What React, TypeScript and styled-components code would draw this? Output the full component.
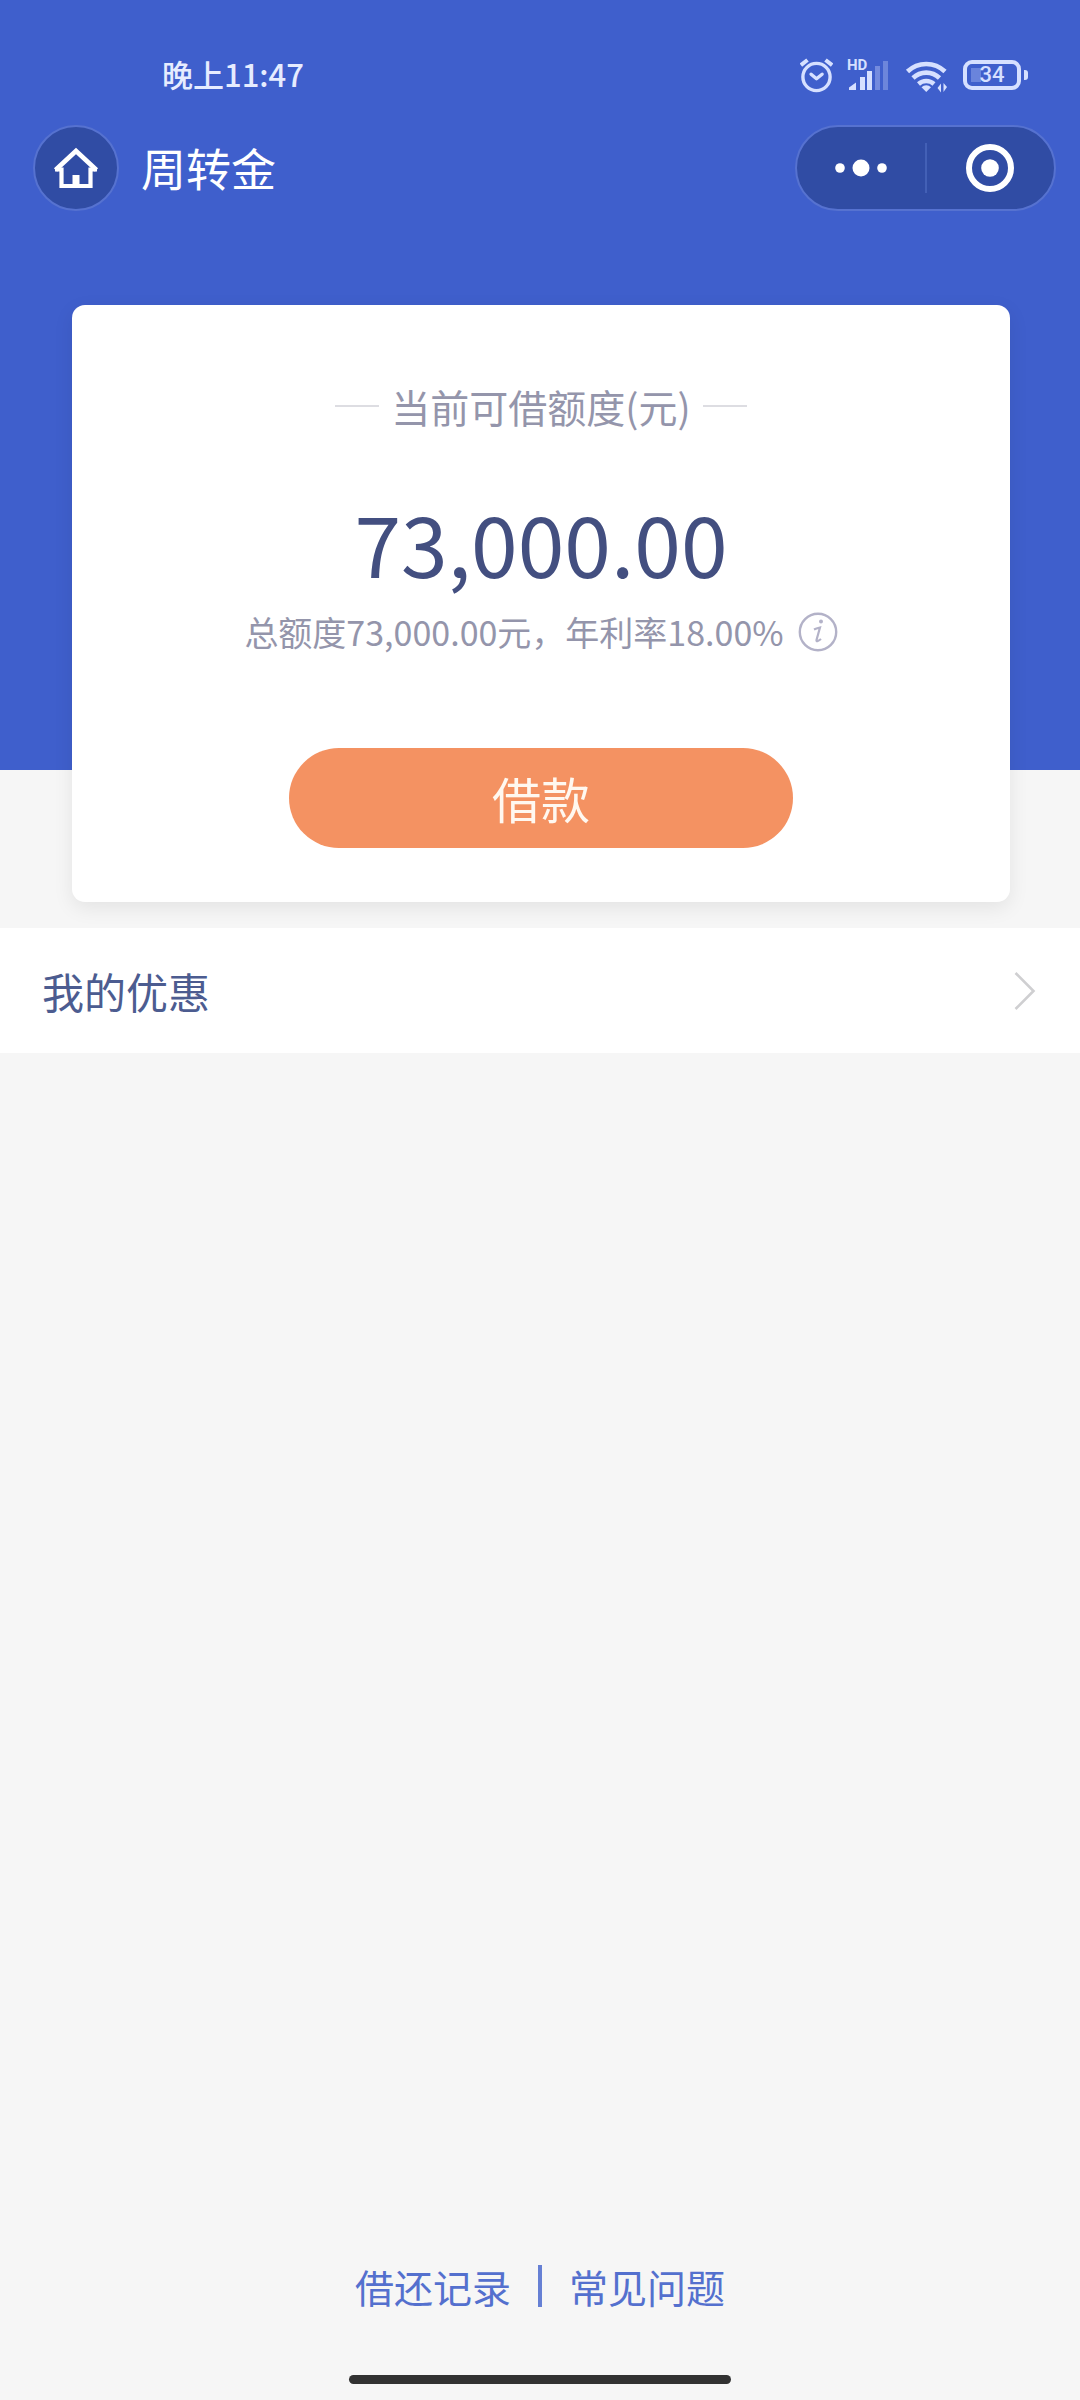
import React from "react";
import styled, { createGlobalStyle } from "styled-components";

const color = {
  brand: "#3f5fcc",
  brandDark: "#304ca4",
  brandLine: "#5672d0",
  statusIcon: "#d6e0ff",
  page: "#f6f6f6",
  navy: "#434f80",
  muted: "#9495ab",
  orange: "#f49262",
  link: "#5470ce",
};

const GlobalStyle = createGlobalStyle`
  * { box-sizing: border-box; }
  body {
    margin: 0;
    background: ${color.page};
    font-family: "Noto Sans CJK SC", "Noto Sans", sans-serif;
  }
  button { font-family: inherit; border: 0; padding: 0; cursor: pointer; }
  svg { display: block; flex: none; }
`;

const Page = styled.div`
  min-height: 100vh;
  display: flex;
  flex-direction: column;
  background: ${color.page};
`;

const Hero = styled.header`
  height: 770px;
  flex: none;
  background: ${color.brand};
`;

const StatusBar = styled.div`
  display: flex;
  align-items: center;
  justify-content: space-between;
  height: 125px;
  padding: 24px 52px 0 162px;
  color: #e6ecff;
`;

const Clock = styled.time`
  padding-bottom: 2px;
  font-size: 31px;
  line-height: 40px;
  font-weight: 500;
`;

const StatusIcons = styled.div`
  display: flex;
  align-items: center;
  gap: 14px;
`;

const Battery = styled.div`
  display: flex;
  align-items: center;
  gap: 3px;
`;

const BatteryBody = styled.div`
  display: flex;
  align-items: center;
  justify-content: center;
  width: 58px;
  height: 30px;
  border: 4px solid ${color.statusIcon};
  border-radius: 9px;
  background: linear-gradient(#6a84dc, #6a84dc) 4px 4px / 10px 14px no-repeat;
  color: ${color.statusIcon};
  font-family: Roboto, sans-serif;
  font-size: 22px;
  line-height: 22px;
  font-weight: 500;
`;

const BatteryTip = styled.div`
  width: 4px;
  height: 10px;
  border-radius: 0 3px 3px 0;
  background: ${color.statusIcon};
`;

const NavBar = styled.nav`
  display: flex;
  align-items: center;
  gap: 22px;
  padding: 0 24px 0 33px;
`;

const HomeButton = styled.button`
  display: flex;
  align-items: center;
  justify-content: center;
  width: 86px;
  height: 86px;
  border: 2px solid ${color.brandLine};
  border-radius: 50%;
  background: ${color.brandDark};
`;

const PageTitle = styled.h1`
  flex: 1;
  margin: 0;
  font-size: 45px;
  line-height: 60px;
  font-weight: 400;
  color: #fff;
`;

const Capsule = styled.div`
  display: flex;
  align-items: center;
  width: 261px;
  height: 86px;
  border: 2px solid ${color.brandLine};
  border-radius: 43px;
  background: ${color.brandDark};
`;

const CapsuleButton = styled.button`
  flex: 1;
  height: 100%;
  display: flex;
  align-items: center;
  justify-content: center;
  background: transparent;
`;

const CapsuleDivider = styled.span`
  width: 2px;
  height: 50px;
  background: #4360b6;
`;

const QuotaCard = styled.section`
  display: flex;
  flex-direction: column;
  align-items: center;
  margin: -465px 70px 0 72px;
  padding: 71px 0 54px;
  border-radius: 13px;
  background: #fff;
  box-shadow: 0 6px 20px rgba(0, 0, 0, 0.08);
`;

const QuotaLabel = styled.h2`
  display: flex;
  align-items: center;
  gap: 12px;
  margin: 0;
  font-size: 39px;
  line-height: 60px;
  font-weight: 400;
  color: ${color.muted};
`;

const Dash = styled.span`
  width: 44px;
  height: 2px;
  background: #dddde2;
`;

const Amount = styled.p`
  margin: 46px 0 0;
  font-size: 84px;
  line-height: 120px;
  color: ${color.navy};
`;

const QuotaDetail = styled.div`
  display: flex;
  align-items: center;
  gap: 14px;
  margin-top: 5px;
  font-size: 34px;
  line-height: 50px;
  color: ${color.muted};
`;

const InfoButton = styled.button`
  background: transparent;
`;

const BorrowButton = styled.button`
  width: 504px;
  height: 100px;
  margin-top: 91px;
  border-radius: 50px;
  background: ${color.orange};
  color: #fff8f0;
  font-size: 49px;
  line-height: 72px;
`;

const MenuRow = styled.a`
  display: flex;
  align-items: center;
  justify-content: space-between;
  position: relative;
  height: 125px;
  margin-top: 26px;
  padding: 0 44px 0 42px;
  background: #fff;
  color: #4c5c90;
  font-size: 42px;
  line-height: 60px;
  text-decoration: none;
`;

const Footer = styled.footer`
  display: flex;
  flex-direction: column;
  align-items: center;
  gap: 59px;
  margin-top: auto;
  padding-bottom: 16px;
`;

const FooterLinks = styled.div`
  display: flex;
  align-items: center;
  gap: 27px;
`;

const FooterLink = styled.a`
  color: ${color.link};
  font-size: 39px;
  line-height: 60px;
  text-decoration: none;
`;

const FooterDivider = styled.span`
  width: 4px;
  height: 42px;
  background: #6680d4;
`;

const HomeIndicator = styled.div`
  width: 382px;
  height: 9px;
  border-radius: 5px;
  background: #323232;
`;

const AlarmIcon = () => (
  <svg width="33" height="36" viewBox="1.500 0 33 36" fill="none" stroke={color.statusIcon} strokeWidth="3.400" strokeLinecap="round" strokeLinejoin="round">
    <circle cx="18" cy="20" r="13.600" />
    <path d="M12.600 17.200 18 21.800l5.600-4.600" />
    <path d="M2.400 8.200 9 3M33.600 8.200 27 3" strokeLinecap="butt" strokeWidth="4" />
  </svg>
);

const SignalIcon = () => (
  <svg width="44" height="36" viewBox="0 0 44 36" fill={color.statusIcon}>
    <text x="0" y="13" fontSize="15" fontWeight="700" fontFamily="Roboto, sans-serif">HD</text>
    <path d="M2 33v-2.500l7-5V33z" />
    <rect x="13" y="20" width="5" height="13" />
    <rect x="20" y="14" width="5" height="19" />
    <rect x="28" y="9" width="5" height="24" opacity="0.350" />
    <rect x="36" y="4" width="5" height="29" opacity="0.300" />
  </svg>
);

const WifiIcon = () => (
  <svg width="44" height="36" viewBox="0 0 44 36" fill="none" stroke={color.statusIcon} strokeWidth="4.600">
    <path d="M2.500 14.500a27 27 0 0 1 37.500 0" />
    <path d="M8 21a19 19 0 0 1 26.500 0" />
    <path d="M13.500 27a11.500 11.500 0 0 1 15.500 0" strokeWidth="4.400" />
    <path d="M16.500 30.200a7 7 0 0 1 9.500 0l-4.750 4.800z" fill={color.statusIcon} stroke="none" />
    <path d="M36 26.500v9l-3.500-4.500zM38.500 26v9l3.500-5z" fill={color.statusIcon} stroke="none" />
  </svg>
);

const HomeIcon = () => (
  <svg width="46" height="44" viewBox="0 0 46 44" fill="none" stroke="#fff" strokeWidth="4.200">
    <path d="M2.500 24 23 5l20.500 19" strokeWidth="4.600" />
    <path d="M2 23.500h6.500V40h29V23.500H44" />
    <rect x="19.500" y="29" width="7" height="10" fill="#fff" stroke="none" />
  </svg>
);

const MoreIcon = () => (
  <svg width="54" height="20" viewBox="0 0 54 20" fill="#fff">
    <circle cx="6" cy="10" r="4.800" />
    <circle cx="27" cy="10" r="8.500" />
    <circle cx="48" cy="10" r="4.800" />
  </svg>
);

const TargetIcon = () => (
  <svg width="48" height="48" viewBox="0 0 48 48">
    <circle cx="24" cy="24" r="21" fill="none" stroke="#fff" strokeWidth="6" />
    <circle cx="24" cy="24" r="8.800" fill="#fff" />
  </svg>
);

const InfoIcon = () => (
  <svg width="40" height="40" viewBox="0 0 40 40" fill="none" stroke="#b3b2c8">
    <circle cx="20" cy="20" r="18.200" strokeWidth="2.400" />
    <circle cx="23" cy="9.500" r="2" fill="#b3b2c8" stroke="none" />
    <path d="M16 17.500c2-1 4-1.500 6-2L18.500 28c-.4 1.800 1.500 1.500 4.500-1" strokeWidth="2.200" />
  </svg>
);

const ChevronIcon = () => (
  <svg width="24" height="40" viewBox="0 0 24 40" fill="none" stroke="#cfcfd1" strokeWidth="2.600">
    <path d="M3.500 2 21.500 20 3.500 38" />
  </svg>
);

export default function App() {
  return (
    <Page>
      <GlobalStyle />
      <Hero>
        <StatusBar>
          <Clock>晚上11:47</Clock>
          <StatusIcons>
            <AlarmIcon />
            <SignalIcon />
            <WifiIcon />
            <Battery>
              <BatteryBody>34</BatteryBody>
              <BatteryTip />
            </Battery>
          </StatusIcons>
        </StatusBar>
        <NavBar>
          <HomeButton aria-label="首页">
            <HomeIcon />
          </HomeButton>
          <PageTitle>周转金</PageTitle>
          <Capsule>
            <CapsuleButton aria-label="更多">
              <MoreIcon />
            </CapsuleButton>
            <CapsuleDivider />
            <CapsuleButton aria-label="关闭">
              <TargetIcon />
            </CapsuleButton>
          </Capsule>
        </NavBar>
      </Hero>

      <QuotaCard>
        <QuotaLabel>
          <Dash />
          当前可借额度(元)
          <Dash />
        </QuotaLabel>
        <Amount>73,000.00</Amount>
        <QuotaDetail>
          <span>总额度73,000.00元，年利率18.00%</span>
          <InfoButton aria-label="说明">
            <InfoIcon />
          </InfoButton>
        </QuotaDetail>
        <BorrowButton>借款</BorrowButton>
      </QuotaCard>

      <MenuRow href="#coupons">
        我的优惠
        <ChevronIcon />
      </MenuRow>

      <Footer>
        <FooterLinks>
          <FooterLink href="#records">借还记录</FooterLink>
          <FooterDivider />
          <FooterLink href="#faq">常见问题</FooterLink>
        </FooterLinks>
        <HomeIndicator />
      </Footer>
    </Page>
  );
}
